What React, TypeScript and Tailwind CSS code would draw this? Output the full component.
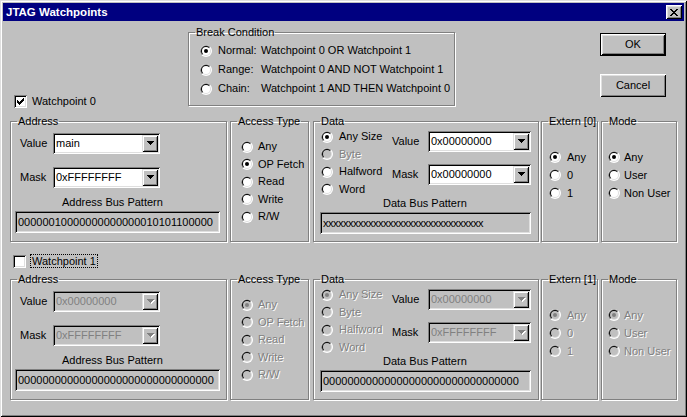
import React from 'react';

const sunken =
  'shadow-[inset_1px_1px_0_#808080,inset_-1px_-1px_0_#fff,inset_2px_2px_0_#000,inset_-2px_-2px_0_#dfdfdf]';
const raised =
  'shadow-[inset_1px_1px_0_#fff,inset_-1px_-1px_0_#000,inset_2px_2px_0_#dfdfdf,inset_-2px_-2px_0_#808080]';
const raisedAlt =
  'shadow-[inset_1px_1px_0_#dfdfdf,inset_-1px_-1px_0_#000,inset_2px_2px_0_#fff,inset_-2px_-2px_0_#808080]';
const grayText = 'text-[#808080] [text-shadow:1px_1px_0_#fff]';

function Radio({ checked, disabled }: { checked?: boolean; disabled?: boolean }) {
  return (
    <svg width="12" height="12" viewBox="0 0 12 12" className="shrink-0">
      <circle cx="6" cy="6" r="6" fill="#fff" />
      <path d="M1.76 10.24A6 6 0 0 1 10.24 1.76Z" fill="#808080" />
      <circle cx="6" cy="6" r="5" fill="#dfdfdf" />
      <path d="M2.46 9.54A5 5 0 0 1 9.54 2.46Z" fill="#000" />
      <circle cx="6" cy="6" r="4" fill={disabled ? '#c0c0c0' : '#fff'} />
      {checked && <circle cx="6" cy="6" r="2" fill={disabled ? '#808080' : '#000'} />}
    </svg>
  );
}

function Option({
  label,
  checked,
  disabled,
  row,
  gap,
}: {
  label: string;
  checked?: boolean;
  disabled?: boolean;
  row: string;
  gap: string;
}) {
  return (
    <div className={`flex items-center ${row} ${gap}`}>
      <Radio checked={checked} disabled={disabled} />
      <span className={`whitespace-nowrap ${disabled ? grayText : ''}`}>{label}</span>
    </div>
  );
}

function CheckBox({ checked }: { checked?: boolean }) {
  const cols = [2, 3, 4, 3, 2, 1, 0];
  return (
    <span className={`w-[13px] h-[13px] bg-white ${sunken} flex items-center justify-center shrink-0`}>
      {checked && (
        <svg width="7" height="7" viewBox="0 0 7 7" shapeRendering="crispEdges">
          {cols.map((y, x) => (
            <rect key={x} x={x} y={y} width="1" height="3" fill="#000" />
          ))}
        </svg>
      )}
    </span>
  );
}

function Arrow({ disabled }: { disabled?: boolean }) {
  const rows = [
    [0, 7],
    [1, 5],
    [2, 3],
    [3, 1],
  ];
  return (
    <svg width="8" height="5" viewBox="0 0 8 5" shapeRendering="crispEdges">
      {disabled &&
        rows.map(([x, w], y) => <rect key={`s${y}`} x={x + 1} y={y + 1} width={w} height="1" fill="#fff" />)}
      {rows.map(([x, w], y) => (
        <rect key={y} x={x} y={y} width={w} height="1" fill={disabled ? '#808080' : '#000'} />
      ))}
    </svg>
  );
}

function Combo({ value, disabled, width }: { value: string; disabled?: boolean; width: string }) {
  return (
    <div className={`${width} h-[21px] p-[2px] flex ${sunken} ${disabled ? 'bg-[#c0c0c0]' : 'bg-white'}`}>
      <span className={`flex-1 pl-[1px] leading-[17px] ${disabled ? 'text-[#808080]' : ''}`}>{value}</span>
      <span className={`w-[16px] h-[17px] bg-[#c0c0c0] ${raisedAlt} flex items-center justify-center pl-[1px]`}>
        <Arrow disabled={disabled} />
      </span>
    </div>
  );
}

function Pattern({ text, className }: { text: string; className: string }) {
  return (
    <div className={`h-[22px] bg-[#c0c0c0] ${sunken} pl-[3px] flex items-center ${className}`}>
      <span className="whitespace-nowrap">{text}</span>
    </div>
  );
}

function Group({ title, className, children }: { title: string; className: string; children?: React.ReactNode }) {
  return (
    <fieldset
      className={`border border-[#808080] shadow-[inset_1px_1px_0_#fff,1px_1px_0_#fff] min-w-0 shrink-0 ${className}`}
    >
      <legend className="ml-[6px] px-[1px] leading-[13px] whitespace-nowrap">{title}</legend>
      {children}
    </fieldset>
  );
}

type WatchpointProps = {
  index: number;
  disabled?: boolean;
  addrValue: string;
  addrMask: string;
  addrPattern: string;
  access: string;
  dataMask: string;
  dataPattern: string;
  xPattern?: boolean;
};

function WatchpointRow(p: WatchpointProps) {
  const d = p.disabled;
  const accessTypes = ['Any', 'OP Fetch', 'Read', 'Write', 'R/W'];
  const sizes = ['Any Size', 'Byte', 'Halfword', 'Word'];
  return (
    <div className="flex">
      <Group title="Address" className="w-[217px] h-[127px]">
        <div className="pl-[9px] mt-[5px] flex items-center h-[21px]">
          <span className="w-[33px]">Value</span>
          <Combo value={p.addrValue} disabled={d} width="w-[107px]" />
        </div>
        <div className="pl-[9px] mt-[13px] flex items-center h-[21px]">
          <span className="w-[33px]">Mask</span>
          <Combo value={p.addrMask} disabled={d} width="w-[107px]" />
        </div>
        <div className="ml-[51px] mt-[8px]">Address Bus Pattern</div>
        <Pattern text={p.addrPattern} className="ml-[4px] mt-[2px] w-[205px]" />
      </Group>

      <Group title="Access Type" className="ml-[3px] w-[79px] h-[127px]">
        <div className="mt-[10px] pl-[10px] flex flex-col">
          {accessTypes.map((a) => (
            <Option key={a} label={a} checked={a === p.access} disabled={d} row="h-[17.5px]" gap="gap-[5px]" />
          ))}
        </div>
      </Group>

      <Group title="Data" className="ml-[4px] w-[226px] h-[127px]">
        <div className="flex">
          <div className="w-[78px] pl-[7px] flex flex-col">
            {sizes.map((s) => (
              <Option
                key={s}
                label={s}
                checked={s === 'Any Size'}
                disabled={d || s === 'Byte'}
                row="h-[17.5px]"
                gap="gap-[6px]"
              />
            ))}
          </div>
          <div className="flex flex-col">
            <div className="mt-[3px] flex items-center h-[21px]">
              <span className="w-[36px]">Value</span>
              <Combo value="0x00000000" disabled={d} width="w-[103px]" />
            </div>
            <div className="mt-[12px] flex items-center h-[21px]">
              <span className="w-[36px]">Mask</span>
              <Combo value={p.dataMask} disabled={d} width="w-[103px]" />
            </div>
          </div>
        </div>
        <div className="ml-[69px] -mt-[1px]">Data Bus Pattern</div>
        <Pattern
          text={p.dataPattern}
          className={`ml-[6px] mt-[2px] w-[211px] ${p.xPattern ? 'tracking-[-0.5px]' : ''}`}
        />
      </Group>

      <Group title={`Extern [${p.index}]`} className="ml-[2px] w-[57px] h-[127px]">
        <div className="mt-[20px] pl-[7px] flex flex-col">
          {['Any', '0', '1'].map((e) => (
            <Option key={e} label={e} checked={e === 'Any'} disabled={d} row="h-[18px]" gap="gap-[6px]" />
          ))}
        </div>
      </Group>

      <Group title="Mode" className="ml-[3px] w-[76px] h-[127px]">
        <div className="mt-[20px] pl-[6px] flex flex-col">
          {['Any', 'User', 'Non User'].map((m) => (
            <Option key={m} label={m} checked={m === 'Any'} disabled={d} row="h-[18px]" gap="gap-[4px]" />
          ))}
        </div>
      </Group>
    </div>
  );
}

function CloseGlyph() {
  const rects = [
    [0, 0, 2], [6, 0, 2],
    [1, 1, 2], [5, 1, 2],
    [2, 2, 4],
    [3, 3, 2],
    [2, 4, 4],
    [1, 5, 2], [5, 5, 2],
    [0, 6, 2], [6, 6, 2],
  ];
  return (
    <svg width="8" height="7" viewBox="0 0 8 7" shapeRendering="crispEdges">
      {rects.map(([x, y, w], i) => (
        <rect key={i} x={x} y={y} width={w} height="1" fill="#000" />
      ))}
    </svg>
  );
}

export default function App() {
  const breakRows = [
    { label: 'Normal:', text: 'Watchpoint 0 OR Watchpoint 1', checked: true },
    { label: 'Range:', text: 'Watchpoint 0 AND NOT Watchpoint 1' },
    { label: 'Chain:', text: 'Watchpoint 1 AND THEN Watchpoint 0' },
  ];

  return (
    <div
      className={`w-[687px] h-[417px] bg-[#c0c0c0] p-[3px] overflow-hidden font-['Liberation_Sans',Arial,sans-serif] text-[11px] leading-[13px] text-black shadow-[inset_1px_1px_0_#dfdfdf,inset_-1px_-1px_0_#000,inset_2px_2px_0_#fff,inset_-2px_-2px_0_#808080]`}
    >
      {/* title bar */}
      <div className="h-[18px] bg-[#000080] flex items-center pl-[3px] pr-[2px]">
        <span className="flex-1 text-white font-bold text-[11.5px]">JTAG Watchpoints</span>
        <span className={`w-[16px] h-[14px] bg-[#c0c0c0] ${raised} flex items-center justify-center pr-[1px]`}>
          <CloseGlyph />
        </span>
      </div>

      <div className="px-[7px]">
        {/* top area */}
        <div className="flex h-[88px]">
          <div className="w-[178px] flex items-end pl-[4px] pb-[1px]">
            <div className="flex items-center gap-[5px] h-[13px]">
              <CheckBox checked />
              <span>Watchpoint 0</span>
            </div>
          </div>

          <Group title="Break Condition" className="w-[267px] h-[80px] mt-[5px]">
            <div className="mt-[2px] pl-[11px] flex flex-col">
              {breakRows.map((r) => (
                <div key={r.label} className="flex items-center h-[19px] gap-[6px]">
                  <Radio checked={r.checked} />
                  <span className="w-[37px]">{r.label}</span>
                  <span className="whitespace-nowrap">{r.text}</span>
                </div>
              ))}
            </div>
          </Group>

          <div className="flex-1" />

          <div className="mr-[11px] mt-[12px] flex flex-col gap-[18px]">
            <button className={`w-[66px] h-[23px] border border-black bg-[#c0c0c0] ${raised}`}>OK</button>
            <button className={`w-[66px] h-[23px] bg-[#c0c0c0] ${raised}`}>Cancel</button>
          </div>
        </div>

        <div className="mt-[6px]">
          <WatchpointRow
            index={0}
            addrValue="main"
            addrMask="0xFFFFFFFF"
            addrPattern="00000010000000000000010101100000"
            access="OP Fetch"
            dataMask="0x00000000"
            dataPattern="xxxxxxxxxxxxxxxxxxxxxxxxxxxxxxxx"
            xPattern
          />
        </div>

        <div className="mt-[12px] h-[14px] pl-[3px] flex items-center gap-[4px]">
          <CheckBox />
          <span className="border border-dotted border-black px-[1px] leading-[12px]">Watchpoint 1</span>
        </div>

        <div className="mt-[5px]">
          <WatchpointRow
            index={1}
            disabled
            addrValue="0x00000000"
            addrMask="0xFFFFFFFF"
            addrPattern="00000000000000000000000000000000"
            access="Any"
            dataMask="0xFFFFFFFF"
            dataPattern="00000000000000000000000000000000"
          />
        </div>
      </div>
    </div>
  );
}
